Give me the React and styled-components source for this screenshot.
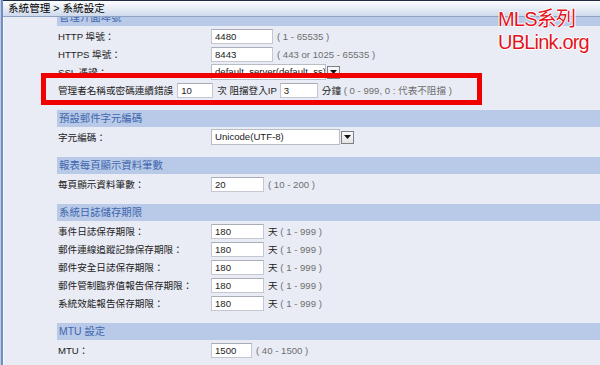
import styled, { createGlobalStyle } from "styled-components";

const GlobalStyle = createGlobalStyle`
  html, body {
    margin: 0;
    padding: 0;
    background: #e9ecf5;
  }
  body {
    font-family: "Liberation Sans", "Noto Sans CJK TC", sans-serif;
  }
`;

const Frame = styled.div`
  position: relative;
  width: 600px;
  height: 365px;
  box-sizing: border-box;
  overflow: hidden;
  display: flex;
  flex-direction: column;
  background: #e9ecf5;
  border-left: 1px solid #c3cbdb;
`;

const Body = styled.div`
  flex: 1;
  display: flex;
  flex-direction: column;
  min-height: 0;
  border-left: 2px solid #6f8ec6;
  box-shadow: inset 1px 0 0 #f7f9fc;
`;

const TitleBar = styled.div`
  height: 17px;
  flex: none;
  box-sizing: border-box;
  padding-left: 5px;
  border-top: 1px solid #1f2c42;
  border-bottom: 1px solid #8ea2c4;
  background: linear-gradient(#fdfdfe, #eaeff7 45%, #cdd9eb);
  font-size: 10.6px;
  line-height: 15px;
  color: #000;
  position: relative;
  z-index: 1;
`;

const Scroll = styled.div`
  flex: 1;
  min-height: 0;
  overflow: hidden;
`;

const Sections = styled.div`
  margin-top: -8px;
  margin-left: 54px;
  display: flex;
  flex-direction: column;
  gap: 11px;
`;

const SectionHead = styled.div`
  height: 17px;
  line-height: 17px;
  padding-left: 2px;
  background: #b8cae8;
  color: #4166ad;
  font-size: 10.4px;
`;

const SectionBody = styled.div`
  padding-top: 1px;
`;

const Row = styled.div`
  height: 18px;
  display: flex;
  align-items: center;
  padding-left: 1px;
  font-size: 9.6px;
  color: #222;
  white-space: nowrap;
`;

const Label = styled.span`
  width: ${(p) => (p.$auto ? "auto" : "153px")};
  margin-right: ${(p) => (p.$auto ? "4px" : "0")};
  flex: none;
`;

const Field = styled.input`
  width: ${(p) => p.$w}px;
  height: 15px;
  box-sizing: border-box;
  margin: 0 4px 0 0;
  padding: 0 0 0 3px;
  border: 1px solid #c4c7cf;
  border-top-color: #a9adb7;
  background: #fff;
  font-family: "Liberation Sans", sans-serif;
  font-size: 9.6px;
  color: #222;
  outline: none;
`;

const SelectBox = styled.div`
  display: flex;
  align-items: center;
  height: 16px;
  margin-right: 4px;
`;

const SelectValue = styled.div`
  width: ${(p) => p.$w}px;
  height: 16px;
  box-sizing: border-box;
  padding-left: 3px;
  line-height: 14px;
  border: 1px solid #b9bdc6;
  background: #fff;
  font-size: 9.6px;
  color: #222;
  overflow: hidden;
`;

const SelectArrow = styled.div`
  width: 13px;
  height: 13px;
  box-sizing: border-box;
  margin-left: 1px;
  border: 1px solid #7d8088;
  background: linear-gradient(#fafafa, #e3e3e3);
  display: flex;
  align-items: center;
  justify-content: center;
`;

const Hint = styled.span`
  color: #6e6e6e;
`;

const Unit = styled.span`
  margin-right: 3px;
`;

const Callout = styled.div`
  position: absolute;
  left: 40px;
  top: 73px;
  width: 441px;
  height: 32px;
  box-sizing: border-box;
  border: 5px solid #f10000;
  pointer-events: none;
`;

const Watermark = styled.div`
  position: absolute;
  left: 497px;
  top: 8px;
  z-index: 2;
  font-family: "Liberation Sans", "Noto Sans CJK TC", sans-serif;
  font-size: 20px;
  line-height: 23px;
  letter-spacing: -0.8px;
  color: #e5141d;
  text-shadow: 1px 0 #fff, -1px 0 #fff, 0 1px #fff, 0 -1px #fff;
`;

function Arrow() {
  return (
    <SelectArrow>
      <svg width="7" height="4" viewBox="0 0 7 4">
        <path d="M0 0h7L3.5 4z" fill="#111" />
      </svg>
    </SelectArrow>
  );
}

function Select({ value, w }) {
  return (
    <SelectBox>
      <SelectValue $w={w}>{value}</SelectValue>
      <Arrow />
    </SelectBox>
  );
}

const retention = [
  "事件日誌保存期限：",
  "郵件連線追蹤記錄保存期限：",
  "郵件安全日誌保存期限：",
  "郵件管制臨界值報告保存期限：",
  "系統效能報告保存期限：",
];

export default function App() {
  return (
    <Frame>
      <GlobalStyle />
      <Body>
        <TitleBar>系統管理 &gt; 系統設定</TitleBar>
        <Scroll>
          <Sections>
            <div>
              <SectionHead>管理介面埠號</SectionHead>
              <SectionBody>
                <Row>
                  <Label>HTTP 埠號：</Label>
                  <Field $w={62} defaultValue="4480" readOnly />
                  <Hint>( 1 - 65535 )</Hint>
                </Row>
                <Row>
                  <Label>HTTPS 埠號：</Label>
                  <Field $w={62} defaultValue="8443" readOnly />
                  <Hint>( 443 or 1025 - 65535 )</Hint>
                </Row>
                <Row>
                  <Label>SSL 憑證：</Label>
                  <Select value="default_server(default_ss)" w={115} />
                </Row>
                <Row>
                  <Label $auto>管理者名稱或密碼連續錯誤</Label>
                  <Field $w={36} defaultValue="10" readOnly />
                  <Unit>次 阻擋登入IP</Unit>
                  <Field $w={38} defaultValue="3" readOnly />
                  <span>分鐘</span>
                  <Hint>&nbsp;( 0 - 999, 0 : 代表不阻擋 )</Hint>
                </Row>
              </SectionBody>
            </div>
            <div>
              <SectionHead>預設郵件字元編碼</SectionHead>
              <SectionBody>
                <Row>
                  <Label>字元編碼：</Label>
                  <Select value="Unicode(UTF-8)" w={129} />
                </Row>
              </SectionBody>
            </div>
            <div>
              <SectionHead>報表每頁顯示資料筆數</SectionHead>
              <SectionBody>
                <Row>
                  <Label>每頁顯示資料筆數：</Label>
                  <Field $w={53} defaultValue="20" readOnly />
                  <Hint>( 10 - 200 )</Hint>
                </Row>
              </SectionBody>
            </div>
            <div>
              <SectionHead>系統日誌儲存期限</SectionHead>
              <SectionBody>
                {retention.map((name) => (
                  <Row key={name}>
                    <Label>{name}</Label>
                    <Field $w={53} defaultValue="180" readOnly />
                    <span>天&nbsp;</span>
                    <Hint>( 1 - 999 )</Hint>
                  </Row>
                ))}
              </SectionBody>
            </div>
            <div>
              <SectionHead>MTU 設定</SectionHead>
              <SectionBody>
                <Row>
                  <Label>MTU：</Label>
                  <Field $w={41} defaultValue="1500" readOnly />
                  <Hint>( 40 - 1500 )</Hint>
                </Row>
              </SectionBody>
            </div>
          </Sections>
        </Scroll>
      </Body>
      <Callout />
      <Watermark>
        MLS系列
        <br />
        UBLink.org
      </Watermark>
    </Frame>
  );
}
